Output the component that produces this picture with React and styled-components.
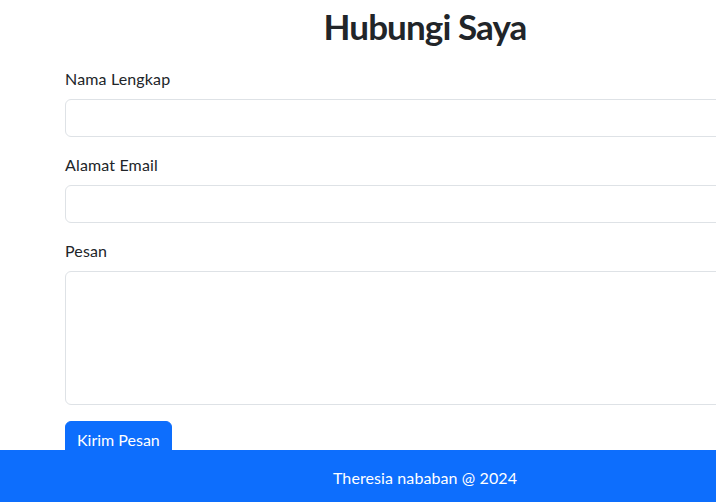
import React from "react";
import styled, { createGlobalStyle } from "styled-components";

const GlobalStyle = createGlobalStyle`
  html, body {
    margin: 0;
    padding: 0;
    background: #ffffff;
    overflow: hidden;
  }
  body {
    font-family: Lato, "Noto Sans", sans-serif;
    font-size: 16px;
    line-height: 24px;
    color: #212529;
  }
  * { box-sizing: border-box; }
`;

const Page = styled.div`
  width: 850px;
  padding-bottom: 80px;
`;

const Container = styled.main`
  width: 720px;
  margin: 0 auto;
  display: flex;
  flex-direction: column;
`;

const Title = styled.h1`
  margin: 5px 0 20px;
  text-align: center;
  font-size: 35px;
  line-height: 42px;
  font-weight: 700;
  letter-spacing: -0.9px;
  color: #212529;
`;

const Field = styled.div`
  display: flex;
  flex-direction: column;
  margin-bottom: 16px;
`;

const Label = styled.label`
  margin-bottom: 8px;
  font-size: 16px;
  line-height: 24px;
  letter-spacing: 0.15px;
`;

const Input = styled.input`
  height: ${(p) => p.h || 38}px;
  padding: 6px 12px;
  border: 1px solid #dee2e6;
  border-radius: 6px;
  font: inherit;
  background: #fff;
  resize: none;
`;

const Button = styled.button`
  align-self: flex-start;
  height: 38px;
  padding: 6px 11px;
  border: 1px solid #0d6efd;
  border-radius: 6px;
  background: #0d6efd;
  color: #fff;
  font: inherit;
`;

const Footer = styled.footer`
  position: fixed;
  left: 0;
  bottom: 0;
  width: 850px;
  height: 52px;
  background: #0d6efd;
  color: #fff;
  display: flex;
  align-items: center;
  justify-content: center;
  padding-top: 4px;
  letter-spacing: 0.1px;
`;

export default function App() {
  return (
    <Page>
      <GlobalStyle />
      <Container>
        <Title>Hubungi Saya</Title>
        <Field>
          <Label>Nama Lengkap</Label>
          <Input type="text" />
        </Field>
        <Field>
          <Label>Alamat Email</Label>
          <Input type="email" />
        </Field>
        <Field>
          <Label>Pesan</Label>
          <Input as="textarea" h={134} />
        </Field>
        <Button>Kirim Pesan</Button>
      </Container>
      <Footer>Theresia nababan @ 2024</Footer>
    </Page>
  );
}
